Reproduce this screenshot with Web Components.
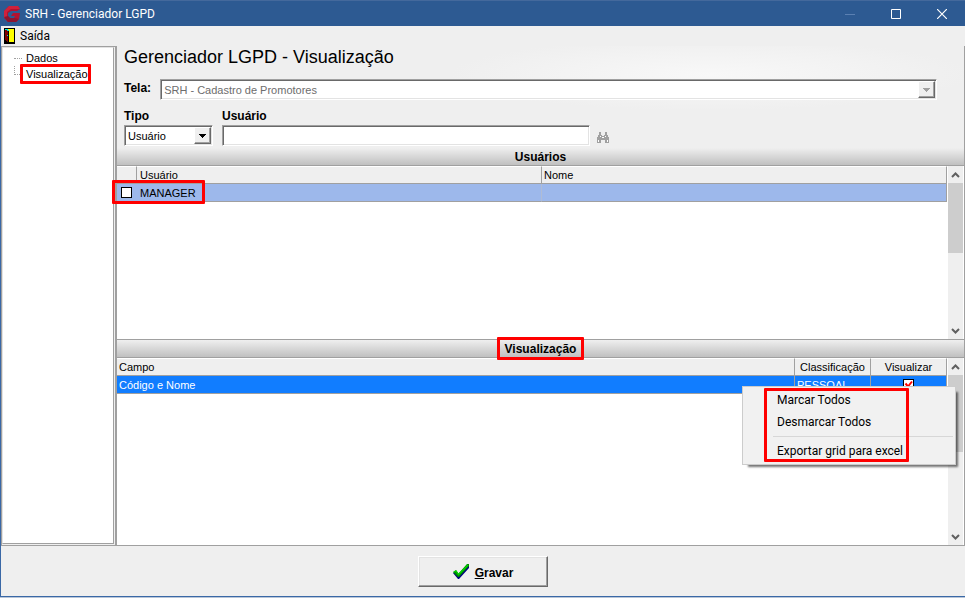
<!DOCTYPE html>
<html lang="pt-BR">
<head>
<meta charset="utf-8">
<title>SRH - Gerenciador LGPD</title>
<style>
  html, body {
    height: 100%;
    margin: 0;
  }

  body {
    background: #efefef;
    color: #000000;
    font-family: "Liberation Sans", Arial, sans-serif;
    font-size: 11px;
    --font-ui: Roboto, "Open Sans", sans-serif;
    --face: #efefef;
    --line: #a0a0a0;
    --mark: #ff0000;
  }
</style>
</head>
<body>
<srh-window>
  <srh-title-bar slot="title" label="SRH - Gerenciador LGPD"></srh-title-bar>
  <srh-menu-bar slot="menu"></srh-menu-bar>
  <srh-tree slot="side"></srh-tree>
  <srh-filter></srh-filter>
  <srh-users-grid></srh-users-grid>
  <srh-fields-grid>
    <srh-context-menu slot="menu"></srh-context-menu>
  </srh-fields-grid>
  <srh-save-button slot="footer" key="G" label="ravar"></srh-save-button>
</srh-window>

<script>
  // Shared by every element
  const base = /* css */ `
    *, *::before, *::after { box-sizing: border-box; }
    :host( [hidden] ) { display: none; }
    button, input, select { color: inherit; font: inherit; margin: 0; }
    svg { display: block; flex: none; }
    .mark { position: relative; }
    .mark::after {
      border: solid 3px var( --mark );
      border-radius: 1px;
      content: '';
      inset: var( --mark-inset, -3px );
      pointer-events: none;
      position: absolute;
      z-index: 3;
    }
  `;

  // Shared by the two grids
  const grid = /* css */ `
    :host {
      display: flex;
      flex-direction: column;
      position: relative;
    }

    .body {
      background: #ffffff;
      border-bottom: solid 1px var( --line );
      display: flex;
      flex: 1;
    }

    .rows {
      flex: 1;
      min-width: 0;
    }

    table {
      border-collapse: separate;
      border-spacing: 0;
      table-layout: fixed;
      width: 100%;
    }

    th, td {
      border-bottom: solid 1px var( --line );
      border-right: solid 1px var( --line );
      font-weight: normal;
      height: 18px;
      line-height: 16px;
      padding: 0 2px;
      text-align: left;
      white-space: nowrap;
    }

    th {
      background: var( --face );
      border-top: solid 1px #ffffff;
    }

    input[type=checkbox] {
      appearance: none;
      background: #ffffff;
      border: solid 1px #000000;
      display: block;
      height: 11px;
      margin: 0 auto;
      width: 11px;
    }
  `;

  class SrhElement extends HTMLElement {
    constructor() {
      super();

      const template = document.createElement( 'template' );
      template.innerHTML = `<style>${base}${this.constructor.css}</style>${this.constructor.html}`;

      // Root
      this.attachShadow( {mode: 'open'} );
      this.shadowRoot.appendChild( template.content.cloneNode( true ) );
    }
  }

  class SrhWindow extends SrhElement {
    static css = /* css */ `
      :host {
        background: var( --face );
        border-bottom: solid 1px #b9c6d8;
        display: flex;
        flex-direction: column;
        min-height: 100vh;
        box-sizing: border-box;
      }

      .frame {
        border-bottom: solid 1px #3a68a6;
        border-left: solid 1px #3a68a6;
        display: flex;
        flex: 1;
        flex-direction: column;
      }

      main {
        display: flex;
        flex: 1;
      }

      section {
        border-right: solid 1px var( --line );
        display: flex;
        flex: 1;
        flex-direction: column;
        min-width: 0;
      }

      footer {
        display: flex;
        justify-content: center;
        padding: 10px 0 9px 0;
      }

      ::slotted( srh-users-grid ) { flex: 1 1 192px; }
      ::slotted( srh-fields-grid ) { flex: 1 1 206px; }
    `;

    static html = /* template */ `
      <slot name="title"></slot>
      <div class="frame">
        <slot name="menu"></slot>
        <main>
          <slot name="side"></slot>
          <section><slot></slot></section>
        </main>
        <footer><slot name="footer"></slot></footer>
      </div>
    `;
  }

  class SrhTitleBar extends SrhElement {
    static css = /* css */ `
      :host {
        align-items: center;
        background: #2d5a92;
        border-top: solid 1px #44699c;
        color: #ffffff;
        display: flex;
        font-family: var( --font-ui );
        height: 26px;
        padding-left: 4px;
        box-sizing: border-box;
      }

      h1 {
        flex: 1;
        font-size: 12px;
        font-weight: normal;
        margin: 0 0 0 5px;
      }

      button {
        align-items: center;
        background: none;
        border: none;
        display: flex;
        height: 25px;
        justify-content: center;
        padding: 0;
        width: 46px;
      }
    `;

    static html = /* template */ `
      <svg width="16" height="17" viewBox="0 0 16 17">
        <path d="M5 1h9l2 3-3 2H7L4 8v3l2 2h4l1-2H7l2-3h7l-1 6-3 3H4l-4-4V6z" fill="#b3122f"/>
        <path d="M5 1h9l2 3h-9L3 7v5l-3 1V6z" fill="#d0213c"/>
        <path d="M0 12l4-1 2 2h5l4 1-3 3H4z" fill="#8c1530"/>
      </svg>
      <h1></h1>
      <button type="button" aria-label="Minimizar">
        <svg width="10" height="10"><path d="M0 5.5h10" stroke="#5b80b2"/></svg>
      </button>
      <button type="button" aria-label="Maximizar">
        <svg width="10" height="10"><path d="M.5.5h9v9h-9z" fill="none" stroke="#ffffff"/></svg>
      </button>
      <button type="button" aria-label="Fechar">
        <svg width="10" height="10"><path d="M0 0l10 10M10 0L0 10" stroke="#ffffff" stroke-width="1.2"/></svg>
      </button>
    `;

    connectedCallback() {
      this.shadowRoot.querySelector( 'h1' ).textContent = this.getAttribute( 'label' );
    }
  }

  class SrhMenuBar extends SrhElement {
    static css = /* css */ `
      :host {
        display: flex;
        font-family: var( --font-ui );
        font-size: 12px;
        height: 20px;
      }

      button {
        align-items: center;
        background: none;
        border: none;
        display: flex;
        gap: 5px;
        padding: 0 4px 1px 3px;
      }
    `;

    static html = /* template */ `
      <button type="button">
        <svg width="11" height="16" viewBox="0 0 11 16" shape-rendering="crispEdges">
          <path d="M0 0h11v16H0z" fill="#000000"/>
          <path d="M4 1h6v13H4z" fill="#ffff00"/>
          <path d="M1 2h1l2 2v10H3l-2-2z" fill="#800000"/>
          <path d="M4 3h1v7H4zM4 10h1v5H3v-1h1z" fill="#000000"/>
          <path d="M1 1h3v1h1v1H3V2H1zM3 7h1v1H3z" fill="#00e0e0"/>
        </svg>
        Saída
      </button>
    `;
  }

  class SrhTree extends SrhElement {
    static css = /* css */ `
      :host {
        border-left: solid 1px var( --line );
        border-right: solid 2px var( --line );
        border-bottom: solid 1px var( --line );
        border-top: solid 1px var( --line );
        display: flex;
        padding: 0 1px 1px 0;
        width: 116px;
        box-sizing: border-box;
      }

      nav {
        background: #ffffff;
        border: solid 1px var( --line );
        border-left-color: #e3e3e3;
        border-top-color: #e3e3e3;
        flex: 1;
        padding: 2px 0 0 11px;
      }

      ul {
        list-style: none;
        margin: 0;
        padding: 0;
      }

      li {
        display: flex;
        height: 16px;
      }

      li::before {
        border-bottom: dotted 1px #a0a0a0;
        content: '';
        height: 9px;
        width: 8px;
      }

      li:last-child::before {
        border-left: dotted 1px #a0a0a0;
      }

      a {
        color: inherit;
        line-height: 16px;
        margin-left: 4px;
        text-decoration: none;
        --mark-inset: -2px -3px -2px -6px;
      }
    `;

    static html = /* template */ `
      <nav>
        <ul>
          <li><a href="#dados">Dados</a></li>
          <li><a class="mark" href="#visualizacao">Visualização</a></li>
        </ul>
      </nav>
    `;
  }

  class SrhFilter extends SrhElement {
    static css = /* css */ `
      :host {
        background: radial-gradient( ellipse 260px 36px at 70% 28%, #f8f8f8, var( --face ) );
        display: flex;
        flex-direction: column;
        height: 102px;
        padding: 0 27px 2px 7px;
        box-sizing: border-box;
      }

      h2 {
        font-size: 18px;
        font-weight: normal;
        line-height: 22px;
        margin: 0 0 11px 0;
      }

      label {
        font-size: 12px;
        font-weight: bold;
        line-height: 18px;
      }

      .screen {
        display: flex;
        gap: 9px;
      }

      .fields {
        align-items: flex-end;
        display: flex;
        gap: 9px;
        margin-top: 7px;
      }

      .field {
        display: flex;
        flex-direction: column;
      }

      .type { width: 89px; }
      .user { width: 368px; }

      .combo {
        background: #ffffff;
        display: flex;
      }

      .combo, input {
        border: solid 1px #ffffff;
        border-left-color: #a0a0a0;
        border-top-color: #a0a0a0;
        box-shadow: inset 1px 1px #696969, inset -1px -1px #e3e3e3;
        flex: none;
        height: 21px;
        padding: 2px;
      }

      input {
        background: #ffffff;
        outline: none;
      }

      .screen .combo {
        color: #6d6d6d;
        flex: 1;
      }

      select {
        appearance: none;
        background: none;
        border: none;
        flex: 1;
        min-width: 0;
        opacity: 1;
        outline: none;
        padding: 0 0 0 1px;
      }

      .arrow {
        align-items: center;
        background: var( --face );
        border: solid 1px #696969;
        border-left-color: #ffffff;
        border-top-color: #ffffff;
        box-shadow: inset -1px -1px #a0a0a0;
        display: flex;
        justify-content: center;
        margin: -1px;
        width: 17px;
      }

      .find {
        background: none;
        border: none;
        margin-left: -2px;
        padding: 0 0 2px 0;
      }
    `;

    static html = /* template */ `
      <h2>Gerenciador LGPD - Visualização</h2>
      <div class="screen">
        <label for="screen">Tela:</label>
        <div class="combo">
          <select id="screen" disabled><option>SRH - Cadastro de Promotores</option></select>
          <span class="arrow">
            <svg width="7" height="4" shape-rendering="crispEdges"><path d="M0 0h7L3.500 4z" fill="#a0a0a0"/></svg>
          </span>
        </div>
      </div>
      <div class="fields">
        <div class="field type">
          <label for="type">Tipo</label>
          <div class="combo">
            <select id="type"><option>Usuário</option></select>
            <span class="arrow">
              <svg width="7" height="4" shape-rendering="crispEdges"><path d="M0 0h7L3.500 4z" fill="#000000"/></svg>
            </span>
          </div>
        </div>
        <div class="field user">
          <label for="user">Usuário</label>
          <input id="user" type="text">
        </div>
        <button class="find" type="button" aria-label="Pesquisar">
          <svg width="12" height="12" viewBox="0 0 12 12" fill="#a0a0a0" shape-rendering="crispEdges">
            <path d="M2 0h2v3h1v1h2V3h1V0h2v3h1v2h1v6H8V8H4v3H0V5h1V3h1z"/>
            <path d="M1 8h1v2H1zM10 8h1v2h-1zM3 4h1v1H3zM8 4h1v1H8zM5 5h2v1H5z" fill="#ffffff"/>
          </svg>
        </button>
      </div>
    `;
  }

  class SrhBand extends SrhElement {
    static css = /* css */ `
      :host {
        background: linear-gradient( #efefef, #c0c0c0 );
        border-bottom: solid 1px var( --line );
        display: flex;
        height: 18px;
        justify-content: center;
        box-sizing: border-box;
      }

      h3 {
        font-size: 12px;
        line-height: 18px;
        margin: 0;
        --mark-inset: -3px -8px -3px -8px;
      }
    `;

    static html = /* template */ `
      <h3><slot></slot></h3>
    `;

    connectedCallback() {
      this.shadowRoot.querySelector( 'h3' ).classList.toggle( 'mark', this.hasAttribute( 'marked' ) );
    }
  }

  class SrhScrollbar extends SrhElement {
    static css = /* css */ `
      :host {
        background: var( --face );
        border-right: solid 1px #ffffff;
        display: flex;
        flex-direction: column;
        margin-left: 1px;
        width: 16px;
        box-sizing: border-box;
      }

      button {
        align-items: center;
        background: none;
        border: none;
        display: flex;
        height: 17px;
        justify-content: center;
        padding: 0;
      }

      .track { flex: 1; }

      .thumb {
        background: #cdcdcd;
        height: var( --thumb, 70px );
      }
    `;

    static html = /* template */ `
      <button type="button" aria-label="Subir">
        <svg width="9" height="6"><path d="M1 5l3.500-3.500L8 5" fill="none" stroke="#606060" stroke-width="2"/></svg>
      </button>
      <div class="track"><div class="thumb"></div></div>
      <button type="button" aria-label="Descer">
        <svg width="9" height="6"><path d="M1 1l3.500 3.500L8 1" fill="none" stroke="#606060" stroke-width="2"/></svg>
      </button>
    `;
  }

  class SrhUsersGrid extends SrhElement {
    static css = grid + /* css */ `
      .check { width: 20px; }
      .user { width: 405px; }

      th:nth-child( 2 ), td:nth-child( 2 ) { padding-left: 3px; }

      td {
        background: #9db8eb;
        border-right-color: #b0bcd4;
      }

      td:first-child {
        border-right-color: #9db8eb;
      }

      td.mark { --mark-inset: -4px -69px -3px -5px; }
      td:last-child { border-right-color: var( --line ); }
    `;

    static html = /* template */ `
      <srh-band>Usuários</srh-band>
      <div class="body">
        <div class="rows">
          <table>
            <colgroup><col class="check"><col class="user"><col></colgroup>
            <thead>
              <tr><th></th><th>Usuário</th><th>Nome</th></tr>
            </thead>
            <tbody>
              <tr>
                <td class="mark"><input type="checkbox" aria-labelledby="manager"></td>
                <td id="manager">MANAGER</td>
                <td></td>
              </tr>
            </tbody>
          </table>
        </div>
        <srh-scrollbar></srh-scrollbar>
      </div>
    `;
  }

  class SrhFieldsGrid extends SrhElement {
    static css = grid + /* css */ `
      .narrow { width: 76px; }
      th.center { text-align: center; }

      td {
        background: #117dff;
        color: #ffffff;
      }

      .box {
        display: grid;
      }

      .box > * { grid-area: 1 / 1; }
      .box svg { margin: 0 auto; }

      srh-scrollbar { --thumb: 77px; }

      ::slotted( srh-context-menu ) {
        position: absolute;
        right: 8px;
        top: 46px;
        z-index: 2;
      }
    `;

    static html = /* template */ `
      <srh-band marked>Visualização</srh-band>
      <div class="body">
        <div class="rows">
          <table>
            <colgroup><col><col class="narrow"><col class="narrow"></colgroup>
            <thead>
              <tr><th>Campo</th><th class="center">Classificação</th><th class="center">Visualizar</th></tr>
            </thead>
            <tbody>
              <tr>
                <td>Código e Nome</td>
                <td>PESSOAL</td>
                <td>
                  <div class="box">
                    <input type="checkbox" aria-label="Visualizar" checked>
                    <svg width="11" height="11"><path d="M2.500 4.500l2.500 3 4-5" fill="none" stroke="#ff0000" stroke-width="2"/></svg>
                  </div>
                </td>
              </tr>
            </tbody>
          </table>
        </div>
        <srh-scrollbar></srh-scrollbar>
      </div>
      <slot name="menu"></slot>
    `;
  }

  class SrhContextMenu extends SrhElement {
    static css = /* css */ `
      :host {
        background: #f1f1f1;
        border: solid 1px #cccccc;
        box-shadow: 4px 4px 2px -2px rgba( 0, 0, 0, 0.55 );
        display: block;
        font-family: var( --font-ui );
        font-size: 12px;
        padding: 2px;
        width: 214px;
        box-sizing: border-box;
      }

      .items {
        display: flex;
        flex-direction: column;
        --mark-inset: -1px 44px 0 19px;
      }

      button {
        background: none;
        border: none;
        height: 22px;
        line-height: 22px;
        padding: 0 0 0 32px;
        text-align: left;
      }

      hr {
        border: none;
        border-top: solid 1px #d7d7d7;
        margin: 3px 0 3px 28px;
      }
    `;

    static html = /* template */ `
      <div class="items mark" role="menu">
        <button type="button" role="menuitem">Marcar Todos</button>
        <button type="button" role="menuitem">Desmarcar Todos</button>
        <hr>
        <button type="button" role="menuitem">Exportar grid para excel</button>
      </div>
    `;
  }

  class SrhSaveButton extends SrhElement {
    static css = /* css */ `
      :host {
        display: block;
      }

      button {
        align-items: center;
        background: var( --face );
        border: solid 1px #696969;
        border-left-color: #ffffff;
        border-top-color: #ffffff;
        box-shadow: inset -1px -1px #a0a0a0, inset 1px 1px #e3e3e3;
        display: flex;
        font-size: 12px;
        font-weight: bold;
        gap: 5px;
        height: 31px;
        justify-content: center;
        padding: 3px 0 0 0;
        width: 130px;
      }

      svg { margin-bottom: 3px; }
    `;

    static html = /* template */ `
      <button type="button">
        <svg width="17" height="16" viewBox="0 0 17 16">
          <path d="M0 9l3-2 3 4 8-10 2 0v3L6 15H5z" fill="#000080"/>
          <path d="M0 8l3-2 2.500 3.500L14 0h2v2L6 13H5z" fill="#008a00"/>
          <path d="M1 8l2-1 2.500 3.500L15 1" fill="none" stroke="#00d800" stroke-width="1.200"/>
        </svg>
        <span><u></u><span class="label"></span></span>
      </button>
    `;

    connectedCallback() {
      this.shadowRoot.querySelector( 'u' ).textContent = this.getAttribute( 'key' );
      this.shadowRoot.querySelector( '.label' ).textContent = this.getAttribute( 'label' );
    }
  }

  window.customElements.define( 'srh-band', SrhBand );
  window.customElements.define( 'srh-scrollbar', SrhScrollbar );
  window.customElements.define( 'srh-title-bar', SrhTitleBar );
  window.customElements.define( 'srh-menu-bar', SrhMenuBar );
  window.customElements.define( 'srh-tree', SrhTree );
  window.customElements.define( 'srh-filter', SrhFilter );
  window.customElements.define( 'srh-users-grid', SrhUsersGrid );
  window.customElements.define( 'srh-fields-grid', SrhFieldsGrid );
  window.customElements.define( 'srh-context-menu', SrhContextMenu );
  window.customElements.define( 'srh-save-button', SrhSaveButton );
  window.customElements.define( 'srh-window', SrhWindow );
</script>
</body>
</html>
